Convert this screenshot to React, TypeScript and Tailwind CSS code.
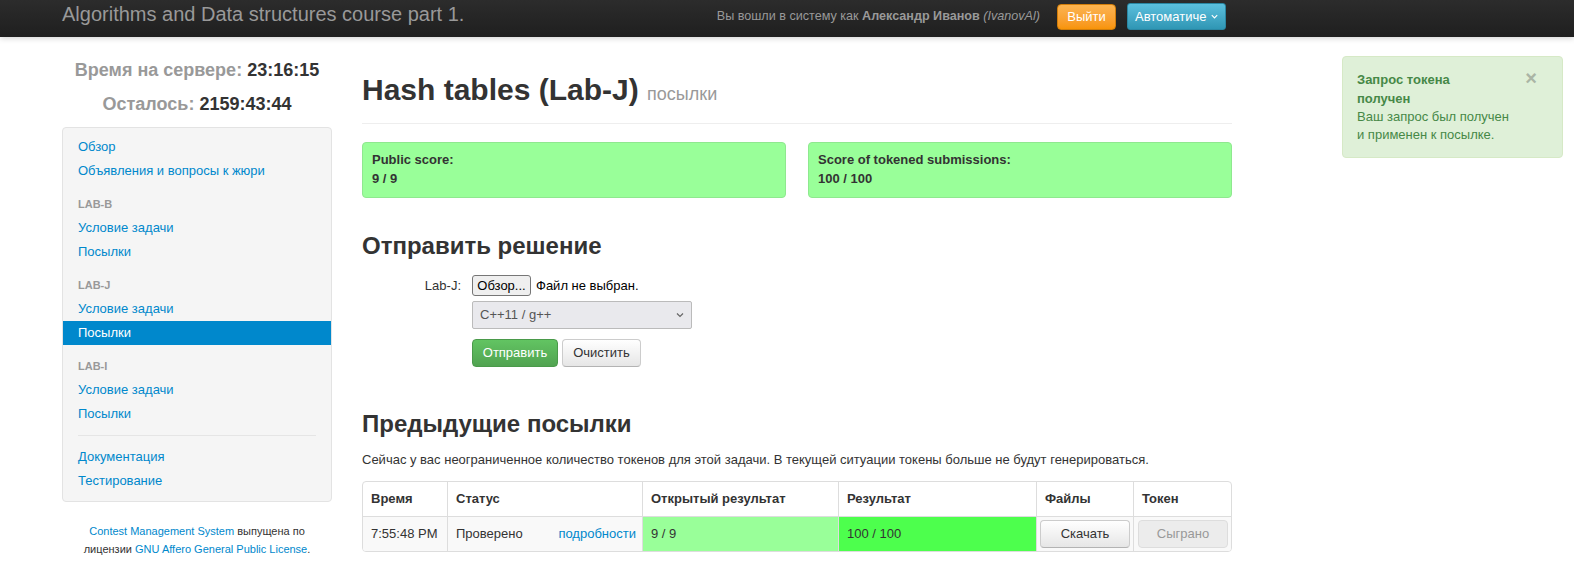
import React from 'react';

const font = { fontFamily: '"Liberation Sans", Arial, Helvetica, sans-serif' };

const NavItem: React.FC<{ label: string; active?: boolean }> = ({ label, active }) => (
  <div
    className={
      'px-[15px] py-[3px] leading-[18px] text-[13px] ' +
      (active ? 'bg-[#0088cc] text-white' : 'text-[#0088cc]')
    }
  >
    {label}
  </div>
);

const NavHeader: React.FC<{ label: string }> = ({ label }) => (
  <div className="mt-[9px] px-[15px] py-[3px] leading-[18px] text-[11px] font-bold uppercase text-[#999]">
    {label}
  </div>
);

const Sidebar: React.FC = () => (
  <aside className="w-[270px] shrink-0">
    <div className="mt-[20px] text-center text-[18px] font-bold leading-[26px] text-[#999]">
      Время на сервере: <span className="text-[#333]">23:16:15</span>
    </div>
    <div className="mt-[8px] text-center text-[18px] font-bold leading-[26px] text-[#999]">
      Осталось: <span className="text-[#333]">2159:43:44</span>
    </div>
    <div className="mt-[10px] rounded-[4px] border border-[#e3e3e3] bg-[#f5f5f5] pt-[7px] pb-[8px]">
      <NavItem label="Обзор" />
      <NavItem label="Объявления и вопросы к жюри" />
      <NavHeader label="Lab-B" />
      <NavItem label="Условие задачи" />
      <NavItem label="Посылки" />
      <NavHeader label="Lab-J" />
      <NavItem label="Условие задачи" />
      <NavItem label="Посылки" active />
      <NavHeader label="Lab-I" />
      <NavItem label="Условие задачи" />
      <NavItem label="Посылки" />
      <div className="mx-[15px] my-[9px] h-px bg-[#e5e5e5]" />
      <NavItem label="Документация" />
      <NavItem label="Тестирование" />
    </div>
    <div className="mt-[20px] text-center text-[11px] leading-[18px] text-[#333]">
      <span className="text-[#0088cc]">Contest Management System</span> выпущена по
      <br />
      лицензии <span className="text-[#0088cc]">GNU Affero General Public License</span>.
    </div>
  </aside>
);

const ScoreBox: React.FC<{ title: string; value: string }> = ({ title, value }) => (
  <div className="rounded-[4px] border border-[#8fe88f] bg-[#99ff99] px-[9px] pt-[7px] pb-[9px] text-[13px] font-bold leading-[19px] text-[#333]">
    <div>{title}</div>
    <div>{value}</div>
  </div>
);

const cols = 'grid grid-cols-[84px_195px_196px_198px_97px_1fr]';

const SubmissionsTable: React.FC = () => (
  <div className="mt-[12px] overflow-hidden rounded-[4px] border border-[#ddd] text-[13px] text-[#333]">
    <div className={cols + ' font-bold leading-[18px]'}>
      <div className="px-[8px] py-[8px]">Время</div>
      <div className="border-l border-[#ddd] px-[8px] py-[8px]">Статус</div>
      <div className="border-l border-[#ddd] px-[8px] py-[8px]">Открытый результат</div>
      <div className="border-l border-[#ddd] px-[8px] py-[8px]">Результат</div>
      <div className="border-l border-[#ddd] px-[8px] py-[8px]">Файлы</div>
      <div className="border-l border-[#ddd] px-[8px] py-[8px]">Токен</div>
    </div>
    <div className={cols + ' border-t border-[#ddd] leading-[18px]'}>
      <div className="flex items-center bg-[#f9f9f9] px-[8px]">7:55:48 PM</div>
      <div className="flex items-center justify-between border-l border-[#ddd] bg-[#f9f9f9] pl-[8px] pr-[6px]">
        <span>Проверено</span>
        <span className="text-[#0088cc]">подробности</span>
      </div>
      <div className="flex items-center border-l border-[#ddd] bg-[#99ff99] px-[8px]">9 / 9</div>
      <div className="flex items-center border-l border-[#ddd] bg-[#4dff4d] px-[8px]">100 / 100</div>
      <div className="flex items-center border-l border-[#ddd] bg-[#f9f9f9] px-[3px] py-[3px]">
        <div className="flex h-[28px] w-[90px] items-center justify-center rounded-[4px] border border-[#ccc] border-b-[#b3b3b3] bg-gradient-to-b from-white to-[#e6e6e6] text-[#333]">
          Скачать
        </div>
      </div>
      <div className="flex items-center border-l border-[#ddd] bg-[#f9f9f9] px-[4px] py-[3px]">
        <div className="flex h-[28px] w-[90px] items-center justify-center rounded-[4px] border border-[#ddd] bg-[#ececec] text-[#999]">
          Сыграно
        </div>
      </div>
    </div>
  </div>
);

const MainContent: React.FC = () => (
  <main className="ml-[30px] w-[870px] shrink-0 text-[#333]">
    <div className="mt-[33px] border-b border-[#eee] pb-[9px]">
      <h1 className="text-[30px] font-bold leading-[40px]">
        Hash tables (Lab-J) <span className="text-[18px] font-normal text-[#999]">посылки</span>
      </h1>
    </div>
    <div className="mt-[18px] grid grid-cols-2 gap-[22px]">
      <ScoreBox title="Public score:" value="9 / 9" />
      <ScoreBox title="Score of tokened submissions:" value="100 / 100" />
    </div>

    <h2 className="mt-[28px] text-[24px] font-bold leading-[40px]">Отправить решение</h2>
    <div className="mt-[9px] flex text-[13px]">
      <div className="w-[99px] pt-[2px] text-right leading-[18px]">Lab-J:</div>
      <div className="ml-[11px] flex flex-col">
        <div className="flex h-[21px] items-center">
          <div className="flex h-[21px] w-[59px] items-center justify-center rounded-[3px] border border-[#767676] bg-[#efefef] text-black">
            Обзор...
          </div>
          <span className="ml-[5px] text-black">Файл не выбран.</span>
        </div>
        <div className="mt-[5px] flex h-[28px] w-[220px] items-center justify-between rounded-[2px] border border-[#bbb] bg-[#e9e9ed] pl-[7px] pr-[6px] text-[#555]">
          <span>C++11 / g++</span>
          <svg width="10" height="10" viewBox="0 0 10 10">
            <path d="M2 3.5 L5 6.5 L8 3.5" fill="none" stroke="#666" strokeWidth="1.2" />
          </svg>
        </div>
        <div className="mt-[10px] flex gap-[4px]">
          <div className="flex h-[28px] w-[86px] items-center justify-center rounded-[4px] border border-[#4a9a4a] bg-gradient-to-b from-[#62c462] to-[#51a351] text-white">
            Отправить
          </div>
          <div className="flex h-[28px] w-[79px] items-center justify-center rounded-[4px] border border-[#ccc] border-b-[#b3b3b3] bg-gradient-to-b from-white to-[#e6e6e6] text-[#333]">
            Очистить
          </div>
        </div>
      </div>
    </div>

    <h2 className="mt-[37px] text-[24px] font-bold leading-[40px]">Предыдущие посылки</h2>
    <p className="mt-[7px] text-[13px] leading-[18px]">
      Сейчас у вас неограниченное количество токенов для этой задачи. В текущей ситуации токены больше не будут генерироваться.
    </p>
    <SubmissionsTable />
  </main>
);

const Notification: React.FC = () => (
  <div className="ml-[110px] mt-[19px] h-[102px] w-[221px] shrink-0 rounded-[4px] border border-[#d6e9c6] bg-[#dff0d8] pl-[14px] pr-[25px] pt-[13px] text-[13px] text-[#468847]">
    <div className="flex justify-between">
      <div className="font-bold leading-[19px]">
        Запрос токена
        <br />
        получен
      </div>
      <span className="mt-[-2px] text-[20px] font-bold leading-[20px] text-[#aab5a5]">×</span>
    </div>
    <div className="leading-[18px]">
      Ваш запрос был получен
      <br />
      и применен к посылке.
    </div>
  </div>
);

const App: React.FC = () => {
  return (
    <div style={font} className="min-h-[566px] bg-white">
      <nav className="flex h-[37px] items-start bg-gradient-to-b from-[#2c2c2c] to-[#1f1f1f] shadow-[0_1px_6px_rgba(0,0,0,0.2)]">
        <div className="pl-[62px] text-[20px] leading-[28px] text-[#999]">
          Algorithms and Data structures course part 1.
        </div>
        <div className="ml-auto mr-[348px] flex items-center pt-[3px]">
          <span className="text-[12.6px] text-[#999]">
            Вы вошли в систему как <b className="text-[#999]">Александр Иванов</b> <i>(IvanovAl)</i>
          </span>
          <div className="ml-[17px] flex h-[26px] w-[59px] items-center justify-center rounded-[4px] border border-[#d17d0a] bg-gradient-to-b from-[#fbb450] to-[#f89406] text-[13px] text-white">
            Выйти
          </div>
          <div className="ml-[11px] flex h-[27px] w-[99px] items-center gap-[4px] rounded-[3px] border border-[#2a87a3] bg-gradient-to-b from-[#5bc0de] to-[#2f96b4] pl-[7px] text-[13px] text-white">
            <span className="whitespace-nowrap">Автоматиче</span>
            <svg width="9" height="9" viewBox="0 0 10 10">
              <path d="M2 3.5 L5 6.5 L8 3.5" fill="none" stroke="white" strokeWidth="1.3" />
            </svg>
          </div>
        </div>
      </nav>
      <div className="flex pl-[62px]">
        <Sidebar />
        <MainContent />
        <Notification />
      </div>
    </div>
  );
};

export default App;
